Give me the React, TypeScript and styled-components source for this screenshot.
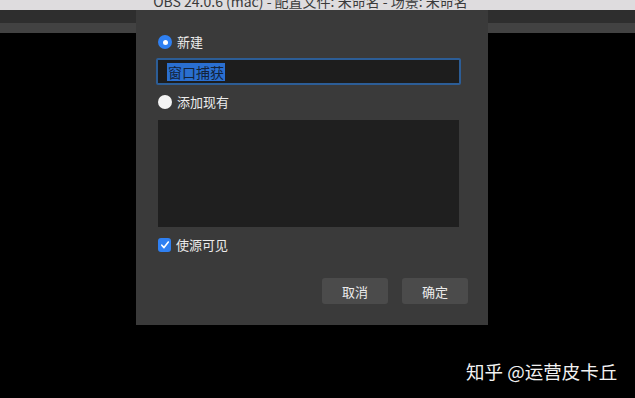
import React from 'react';
import styled, { createGlobalStyle } from 'styled-components';

const GlobalStyle = createGlobalStyle`
  html, body {
    margin: 0;
    padding: 0;
    background: #000;
    font-family: "Noto Sans CJK SC", "Noto Sans", sans-serif;
  }
`;

const Screen = styled.div`
  position: relative;
  width: 635px;
  height: 398px;
  overflow: hidden;
  background: #000;
`;

const TitleBar = styled.div`
  height: 10px;
  background: #dedcde;
  display: flex;
  justify-content: center;
  align-items: flex-end;
  overflow: hidden;
`;

const TitleText = styled.div`
  font-size: 14px;
  line-height: 14px;
  color: #3a3a3a;
  margin-bottom: 2px;
  margin-left: -14px;
  white-space: nowrap;
`;

const Band = styled.div<{ tone: string; h: number }>`
  height: ${({ h }) => h}px;
  background: ${({ tone }) => tone};
`;

const Dialog = styled.div`
  position: absolute;
  left: 136px;
  top: 10px;
  width: 352px;
  height: 315px;
  box-sizing: border-box;
  background: #3a3a3a;
  padding: 23px 20px 0 20px;
  display: flex;
  flex-direction: column;
  color: #ececec;
  font-size: 13px;
`;

const OptionRow = styled.label<{ mt?: number }>`
  display: flex;
  align-items: center;
  gap: 5px;
  height: 18px;
  margin-left: 2px;
  margin-top: ${({ mt }) => mt ?? 0}px;
  line-height: 18px;
`;

const Radio = styled.span<{ checked?: boolean }>`
  width: 14px;
  height: 14px;
  border-radius: 50%;
  box-sizing: border-box;
  background: ${({ checked }) => (checked ? '#2f80f2' : '#f4f4f4')};
  display: flex;
  align-items: center;
  justify-content: center;
  &::after {
    content: '';
    width: 5px;
    height: 5px;
    border-radius: 50%;
    background: #fff;
    display: ${({ checked }) => (checked ? 'block' : 'none')};
  }
`;

const Check = styled.span`
  width: 13px;
  height: 14px;
  border-radius: 3px;
  background: #2f80f2;
  display: flex;
  align-items: center;
  justify-content: center;
`;

const Input = styled.div`
  margin-top: 7px;
  width: 305px;
  height: 27px;
  box-sizing: border-box;
  border: 2px solid #2c5d96;
  border-radius: 2px;
  background: #1d1d1d;
  display: flex;
  align-items: center;
  padding-left: 9px;
`;

const Selected = styled.span`
  background: #2a6fd0;
  color: #13233a;
  font-size: 14px;
  line-height: 18px;
  padding: 0 1px;
`;

const ListBox = styled.div`
  margin: 9px 0 0 2px;
  width: 301px;
  height: 107px;
  background: #1f1f1f;
`;

const Buttons = styled.div`
  margin-top: 24px;
  display: flex;
  justify-content: flex-end;
  gap: 14px;
`;

const Button = styled.button`
  width: 66px;
  height: 26px;
  border: none;
  border-radius: 3px;
  background: #4b4b4b;
  color: #ececec;
  font-family: inherit;
  font-size: 13px;
  padding: 0;
`;

const Watermark = styled.div`
  position: absolute;
  left: 466px;
  top: 359px;
  font-size: 18.5px;
  line-height: 24px;
  color: #f2f2f2;
  white-space: nowrap;
`;

export default function App() {
  return (
    <Screen>
      <GlobalStyle />
      <TitleBar>
        <TitleText>OBS 24.0.6 (mac) - 配置文件: 未命名 - 场景: 未命名</TitleText>
      </TitleBar>
      <Band tone="#2e2e2e" h={13} />
      <Band tone="#424242" h={10} />
      <Dialog>
        <OptionRow>
          <Radio checked />
          新建
        </OptionRow>
        <Input>
          <Selected>窗口捕获</Selected>
        </Input>
        <OptionRow mt={8}>
          <Radio />
          添加现有
        </OptionRow>
        <ListBox />
        <OptionRow mt={9}>
          <Check>
            <svg width="10" height="10" viewBox="0 0 10 10">
              <path d="M1.8 5.2 L4 7.6 L8.3 2" fill="none" stroke="#fff" strokeWidth="1.6" strokeLinecap="round" strokeLinejoin="round" />
            </svg>
          </Check>
          使源可见
        </OptionRow>
        <Buttons>
          <Button>取消</Button>
          <Button>确定</Button>
        </Buttons>
      </Dialog>
      <Watermark>知乎 @运营皮卡丘</Watermark>
    </Screen>
  );
}
